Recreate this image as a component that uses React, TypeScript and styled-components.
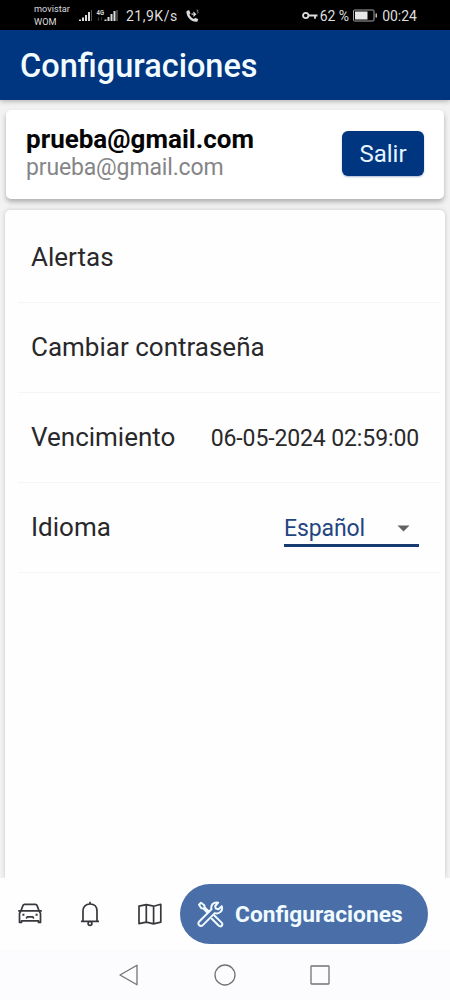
import React from 'react';
import styled, { createGlobalStyle } from 'styled-components';

const Global = createGlobalStyle`
  * { box-sizing: border-box; }
  html, body { margin: 0; padding: 0; background: #fdfdfd; }
  body { font-family: Roboto, "Liberation Sans", sans-serif; color: #29282b; }
  button { font: inherit; border: 0; padding: 0; margin: 0; background: none; }
`;

const Screen = styled.div`
  width: 450px;
  height: 1000px;
  display: flex;
  flex-direction: column;
  overflow: hidden;
  background: #f2f2f2;
`;

const StatusBar = styled.div`
  height: 30px;
  flex: none;
  background: #000;
  color: #dedede;
  display: flex;
  align-items: center;
  padding: 2px 33px 0 34px;
  font-size: 14px;
  line-height: 16px;
  white-space: nowrap;
`;

const Carriers = styled.div`
  font-size: 9.2px;
  line-height: 13px;
  width: 44px;
  padding-bottom: 2px;
`;

const Signals = styled.svg`
  width: 42px;
  height: 16px;
  margin-right: 6px;
`;

const Speed = styled.span`
  width: 60px;
  letter-spacing: 0.5px;
`;

const StatusRight = styled.div`
  margin-left: auto;
  display: flex;
  align-items: center;
  font-size: 14px;
`;

const BatterySlot = styled.span`
  display: flex;
  margin: -2px 4px 0;
`;

const Header = styled.header`
  position: relative;
  height: 70px;
  flex: none;
  background: #003580;
  display: flex;
  align-items: center;
  padding: 2px 0 0 20px;
  box-shadow: 0 1px 5px rgba(0, 0, 0, 0.3);
`;

const Title = styled.h1`
  margin: 0;
  font-size: 32.5px;
  line-height: 40px;
  font-weight: 500;
  color: #f2fcff;
`;

const Content = styled.main`
  flex: 1;
  min-height: 0;
  display: flex;
  flex-direction: column;
  padding: 10px 5px 0;
`;

const AccountCard = styled.section`
  height: 89px;
  flex: none;
  margin: 0 1px 11px;
  padding: 0 20px;
  background: #fff;
  border-radius: 5px;
  box-shadow: 0 3px 5px rgba(0, 0, 0, 0.28);
  display: flex;
  align-items: center;
  justify-content: space-between;
`;

const AccountText = styled.div`
  padding-bottom: 3px;
`;

const AccountName = styled.div`
  font-size: 26px;
  line-height: 28px;
  font-weight: 700;
  color: #050505;
`;

const AccountMail = styled.div`
  font-size: 23px;
  line-height: 29px;
  letter-spacing: -0.15px;
  color: #858587;
`;

const LogoutButton = styled.button`
  width: 82px;
  height: 45px;
  margin: 0 0 2px;
  border-radius: 6px;
  background: #003580;
  color: #e4f5ff;
  font-size: 24px;
  box-shadow: 0 1px 2px rgba(0, 53, 128, 0.35);
`;

const Panel = styled.section`
  flex: 1;
  background: #fefefe;
  border-radius: 5px 5px 0 0;
  box-shadow: 0 0 4px rgba(0, 0, 0, 0.18);
  padding: 3px 5px 0 13px;
`;

const Row = styled.div`
  height: 90px;
  border-bottom: 1px solid #f5f5f5;
  padding: 0 21px 0 13px;
  display: flex;
  align-items: center;
  justify-content: space-between;
`;

const RowLabel = styled.span`
  font-size: 26px;
  padding-bottom: 2px;
`;

const RowValue = styled.span`
  font-size: 23px;
  letter-spacing: -0.12px;
  padding-top: 1px;
`;

const Select = styled.button`
  width: 135px;
  height: 39px;
  border-bottom: 3px solid #173b70;
  display: flex;
  align-items: center;
  justify-content: space-between;
  padding: 4px 9px 0 0;
  font-size: 23px;
  letter-spacing: -0.1px;
  color: #244580;
`;

const TabBar = styled.nav`
  position: relative;
  height: 72px;
  flex: none;
  background: #fefefe;
  display: flex;
  align-items: center;
`;

const Tab = styled.button`
  width: 60px;
  height: 60px;
  display: flex;
  align-items: center;
  justify-content: center;
  color: #38373c;
`;

const ActiveTab = styled.button`
  width: 247.5px;
  height: 60px;
  border-radius: 30px;
  background: #4a6ea7;
  color: #f0fbff;
  display: flex;
  align-items: center;
  gap: 11px;
  padding: 1px 0 0 17px;
  font-size: 22.75px;
  font-weight: 700;
`;

const SystemBar = styled.div`
  height: 50px;
  flex: none;
  background: #fcfbfd;
  display: flex;
  align-items: center;
  justify-content: center;
  gap: 73px;
`;

const SettingsRow = ({ label, children }: { label: string; children?: React.ReactNode }) => (
  <Row>
    <RowLabel>{label}</RowLabel>
    {children}
  </Row>
);

const SignalIcon = () => (
  <Signals viewBox="0 0 42 16" fill="#dcdcdc">
    <path d="M1 11.5h2V13H1zM4 9.5h2V13H4zM7 7h2v6H7zM10 4h2v9h-2z" />
    <path d="M13 2h1v11h-1z" fill="#555" />
    <path d="M26.5 11.5h2V13h-2zM29.5 9h2v4h-2zM32.5 6h2v7h-2zM35.5 3h2v10h-2z" />
    <path d="M38.5 2h1v11h-1z" fill="#888" />
    <text x="18.5" y="7" fontSize="7.5" fontWeight="700" textLength="7.5" lengthAdjust="spacingAndGlyphs">4G</text>
    <path d="M20.5 9v3.5m-1-1 1 1 1-1M23.5 12.5V9" fill="none" stroke="#333" strokeWidth="1" />
  </Signals>
);

const CallIcon = () => (
  <svg width="15" height="15" viewBox="0 0 15 15">
    <path d="M.4 2.2 3 1 4.5 4.2 3.4 5.5C4.3 7.6 5.9 9.1 7.9 10L9.3 8.7 12.3 10.3 11.2 12.7C5.5 13.4.2 8 .4 2.2Z" fill="#dcdcdc" />
    <path d="M5.5 5.2h3.8M7.4 3.1 9.5 5.2 7.4 7.3" fill="none" stroke="#dcdcdc" strokeWidth="1.2" />
    <path d="M10.6 1.2h1.5l-.8 1.3c1.5.1 1.1 1.9-.5 1.5" fill="none" stroke="#aaa" strokeWidth=".7" />
  </svg>
);

const KeyIcon = () => (
  <svg width="18" height="12" viewBox="0 0 18 12" fill="none" stroke="#dcdcdc" strokeWidth="1.8">
    <circle cx="3.7" cy="5.5" r="2.7" />
    <path d="M6.4 5.5H15.5M13 5.5v3.2" />
  </svg>
);

const BatteryIcon = () => (
  <svg width="25" height="13" viewBox="0 0 25 13">
    <rect x=".5" y="1" width="20.5" height="11" rx="1" fill="none" stroke="#a5a5a5" />
    <path d="M2 2.5h12.5v8H2z" fill="#e7e7e7" />
    <path d="M22.5 4.5H24v4h-1.5z" fill="#bbb" />
  </svg>
);

const CarIcon = () => (
  <svg width="26" height="24" viewBox="0 0 26 24" fill="none" stroke="currentColor" strokeWidth="1.7" strokeLinejoin="round">
    <path d="M3.8 9.2 6 3.4Q6.4 2.3 7.6 2.3H18.4Q19.6 2.3 20 3.4L22.2 9.2" />
    <path d="M1.2 8.9H24.8M3.8 9.2 2.5 11.5V20.4H4.5V18.9H21.5V20.4H23.5V11.5L22.2 9.2" />
    <path d="M9.2 16.4 10.3 14.8H15.7L16.8 16.4" />
    <path d="M5.4 12.8H7.4M18.6 12.8H20.6" strokeWidth="2" />
  </svg>
);

const BellIcon = () => (
  <svg width="20" height="26" viewBox="0 0 20 26" fill="none" stroke="currentColor" strokeWidth="1.7" strokeLinejoin="round">
    <path d="M3 20V10.2C3 5.5 5.8 3 10 3S17 5.5 17 10.2V20" />
    <path d="M1 20.3H19M10 3V.8" />
    <circle cx="10" cy="22.4" r="1.9" />
  </svg>
);

const MapIcon = () => (
  <svg width="24" height="22" viewBox="0 0 24 22" fill="none" stroke="currentColor" strokeWidth="1.7" strokeLinejoin="round">
    <path d="M1 3.2 8.3 1.6 15.6 3.2 22.8 1.3V19.2L15.6 20.8 8.3 19.2 1 20.6ZM8.3 1.6V19.2M15.6 3.2V20.8" />
  </svg>
);

const ToolsIcon = () => (
  <svg width="27" height="27" viewBox="0 0 27 27" fill="none" stroke="currentColor" strokeWidth="2" strokeLinejoin="round" strokeLinecap="round">
    <path d="M2 3.8 4 1.8 7.3 4.2 7.6 6.4 11.7 10.3M2 3.8 4.3 7.3 6.5 7.6 10.3 11.5" />
    <path d="M17.4 14.5 24.6 21.6C26.6 24 24 26.4 21.8 24.8L14.8 17.8" />
    <path d="M24.8 5.2 21.5 8.3 18.8 7.6 18.2 5 21.2 1.7C16.5.7 13.4 4 14.5 8.2L2 20.8C.2 23.5 3.1 26.1 5.6 24.4L17.8 12.1C22.4 13.4 26.2 9.8 24.8 5.2Z" />
  </svg>
);

export default function App() {
  return (
    <Screen>
      <Global />
      <StatusBar>
        <Carriers>movistar<br />WOM</Carriers>
        <SignalIcon />
        <Speed>21,9K/s</Speed>
        <CallIcon />
        <StatusRight>
          <KeyIcon />
          <span>62 %</span>
          <BatterySlot><BatteryIcon /></BatterySlot>
          <span>00:24</span>
        </StatusRight>
      </StatusBar>
      <Header><Title>Configuraciones</Title></Header>
      <Content>
        <AccountCard>
          <AccountText>
            <AccountName>prueba@gmail.com</AccountName>
            <AccountMail>prueba@gmail.com</AccountMail>
          </AccountText>
          <LogoutButton>Salir</LogoutButton>
        </AccountCard>
        <Panel>
          <SettingsRow label="Alertas" />
          <SettingsRow label="Cambiar contraseña" />
          <SettingsRow label="Vencimiento"><RowValue>06-05-2024 02:59:00</RowValue></SettingsRow>
          <SettingsRow label="Idioma">
            <Select>
              Español
              <svg width="13" height="7" viewBox="0 0 13 7"><path d="M.5.5h12l-6 6z" fill="#626164" /></svg>
            </Select>
          </SettingsRow>
        </Panel>
      </Content>
      <TabBar>
        <Tab><CarIcon /></Tab>
        <Tab><BellIcon /></Tab>
        <Tab><MapIcon /></Tab>
        <ActiveTab><ToolsIcon />Configuraciones</ActiveTab>
      </TabBar>
      <SystemBar>
        <svg width="22" height="24" viewBox="0 0 22 24" fill="none" stroke="#737275" strokeWidth="1.3"><path d="M18 2.2v19.6L1 12z" strokeLinejoin="round" /></svg>
        <svg width="22" height="22" viewBox="0 0 22 22" fill="none" stroke="#737275" strokeWidth="1.3"><circle cx="11" cy="11" r="10" /></svg>
        <svg width="22" height="22" viewBox="0 0 22 22" fill="none" stroke="#737275" strokeWidth="1.3"><rect x="2" y="2" width="18" height="18" rx=".5" /></svg>
      </SystemBar>
    </Screen>
  );
}
